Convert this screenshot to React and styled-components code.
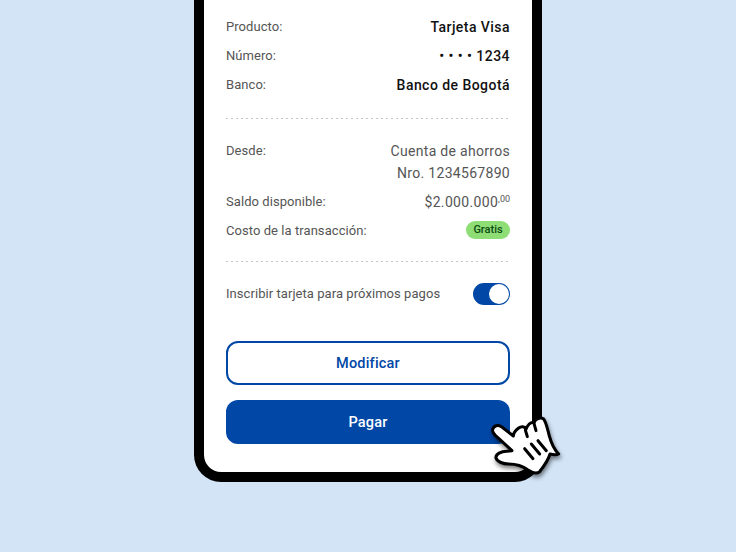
import React from 'react';
import styled, { createGlobalStyle } from 'styled-components';

const Global = createGlobalStyle`
  html, body { margin: 0; padding: 0; background: #d3e4f7; }
  body { font-family: Roboto, "Noto Sans", sans-serif; }
`;

const Page = styled.div`
  position: relative;
  width: 736px;
  height: 552px;
  overflow: hidden;
  display: flex;
  justify-content: center;
  align-items: flex-start;
  background: #d3e4f7;
`;

const Phone = styled.div`
  box-sizing: border-box;
  width: 348px;
  height: 482px;
  background: #fff;
  border: 10px solid #000;
  border-top: 0;
  border-radius: 0 0 27px 27px;
  padding: 0 22px;
  display: flex;
  flex-direction: column;
`;

const Group = styled.div`
  display: flex;
  flex-direction: column;
  padding-top: ${p => p.$top || 0}px;
`;

const Row = styled.div`
  display: flex;
  justify-content: space-between;
  align-items: ${p => p.$center ? 'center' : 'flex-start'};
  margin-top: ${p => p.$top || 0}px;
`;

const Label = styled.span`
  font-size: 13px;
  line-height: 18px;
  letter-spacing: 0.06px;
  color: #555;
  padding-top: ${p => p.$pad ?? 1}px;
`;

const Value = styled.span`
  font-size: 14px;
  line-height: 18px;
  font-weight: 500;
  letter-spacing: 0.45px;
  color: #111;
  text-align: right;
  padding-top: 1px;
`;

const Account = styled.span`
  font-size: 14px;
  line-height: 22px;
  letter-spacing: 0.3px;
  color: #555;
  text-align: right;
`;

const Amount = styled.span`
  font-size: 14px;
  line-height: 18px;
  letter-spacing: 0.33px;
  color: #555;
  padding-top: 1px;
  sup {
    font-size: 9px;
    line-height: 0;
    letter-spacing: 0;
    vertical-align: 5px;
  }
`;

const Badge = styled.span`
  box-sizing: border-box;
  width: 44px;
  height: 18px;
  border-radius: 9px;
  background: #8ede75;
  color: #0d4a12;
  font-size: 11px;
  font-weight: 500;
  line-height: 18px;
  text-align: center;
`;

const Divider = styled.div`
  height: 1px;
  margin-top: ${p => p.$top}px;
  background: repeating-linear-gradient(90deg, #c4c4c4 0 2px, transparent 2px 5px);
`;

const Toggle = styled.div`
  box-sizing: border-box;
  width: 37px;
  height: 22px;
  border-radius: 11px;
  background: #0047a6;
  display: flex;
  justify-content: flex-end;
  padding: 1px;
`;

const Knob = styled.div`
  width: 20px;
  height: 20px;
  border-radius: 50%;
  background: #fff;
`;

const Button = styled.button`
  box-sizing: border-box;
  display: block;
  width: 100%;
  height: 44px;
  border-radius: 12px;
  border: 2px solid #0047a6;
  background: ${p => p.$solid ? '#0047a6' : '#fff'};
  color: ${p => p.$solid ? '#fff' : '#0047a6'};
  font-family: inherit;
  font-size: 14.5px;
  font-weight: 500;
  letter-spacing: 0.2px;
  margin-top: ${p => p.$top}px;
`;

const Cursor = styled.svg`
  position: absolute;
  left: 488px;
  top: 412px;
  overflow: visible;
  filter: drop-shadow(1px 3px 2px rgba(0, 0, 0, 0.5));
`;

// traced from the reference, viewBox is the crop at 3x
const Hand = () => (
  <Cursor width="76" height="66" viewBox="0 0 228 198">
    <path
      d="M14 52 C18 40 30 38 40 44 L76 72 C76 62 84 54 92 48 C100 42 110 42 114 52 C118 40 128 28 138 32 C142 22 156 14 166 20 C174 28 178 50 184 72 C190 94 198 112 212 126 C204 130 194 128 186 126 C182 140 170 160 154 180 C144 186 132 182 120 174 C104 162 84 156 62 156 C46 156 28 150 24 138 C22 126 40 118 56 118 L72 116 L22 70 C16 64 12 58 14 52 Z"
      fill="#fff"
      stroke="#000"
      strokeWidth="9"
      strokeLinejoin="round"
    />
    <g stroke="#000" strokeWidth="9" strokeLinecap="round" fill="none">
      <path d="M110 110 L135 140" />
      <path d="M130 96 L155 126" />
      <path d="M150 86 L175 116" />
      <path d="M112 54 L118 74" />
      <path d="M138 34 L144 56" />
    </g>
  </Cursor>
);

export default function App() {
  return (
    <Page>
      <Global />
      <Phone>
        <Group $top={17}>
          <Row><Label>Producto:</Label><Value>Tarjeta Visa</Value></Row>
          <Row $top={10}><Label>Número:</Label><Value>• • • • 1234</Value></Row>
          <Row $top={10}><Label>Banco:</Label><Value>Banco de Bogotá</Value></Row>
        </Group>
        <Divider $top={24} />
        <Group $top={21}>
          <Row>
            <Label $pad={2}>Desde:</Label>
            <Account>Cuenta de ahorros<br />Nro. 1234567890</Account>
          </Row>
          <Row $top={8}><Label>Saldo disponible:</Label><Amount>$2.000.000<sup>,00</sup></Amount></Row>
          <Row $top={10}><Label>Costo de la transacción:</Label><Badge>Gratis</Badge></Row>
        </Group>
        <Divider $top={21} />
        <Group $top={21}>
          <Row $center>
            <Label $pad={0}>Inscribir tarjeta para próximos pagos</Label>
            <Toggle><Knob /></Toggle>
          </Row>
        </Group>
        <Button $top={36}>Modificar</Button>
        <Button $solid $top={15}>Pagar</Button>
      </Phone>
      <Hand />
    </Page>
  );
}
